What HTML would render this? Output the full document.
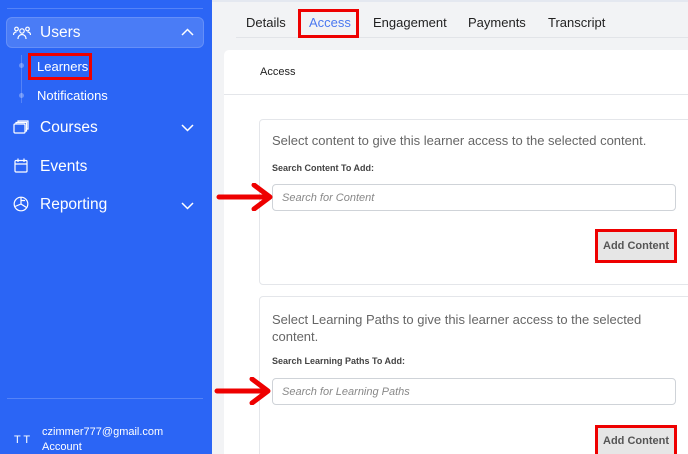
<!DOCTYPE html>
<html><head><style>
*{box-sizing:border-box;margin:0;padding:0}
html,body{width:688px;height:454px;overflow:hidden}
body{background:#f2f3f5;font-family:"Liberation Sans",sans-serif;position:relative}
.sb{position:absolute;left:0;top:0;width:212px;height:454px;background:#2b65f5;color:#fff}
.hr{position:absolute;left:7px;width:196px;height:1px;background:rgba(255,255,255,.2)}
.ab{position:absolute}
.t{position:absolute;font-size:13px;color:#222}
.box{position:absolute;background:#fff;border:1px solid #e4e6ea;border-radius:4px}
.inp{position:absolute;left:272px;width:404px;height:27px;border:1px solid #cfd3d8;border-radius:4px;background:#fff;font-size:11px;font-style:italic;color:#888;padding:7px 9px}
.btn{position:absolute;left:595px;width:82px;border:3px solid #e00;background:#e6e6e6;font-size:11px;font-weight:bold;color:#555;text-align:center}
</style></head><body>
<div class="sb">
<div class="hr" style="top:8px"></div>
<div class="ab" style="left:6px;top:17px;width:198px;height:31px;background:rgba(255,255,255,.15);border-radius:6px;border:1px solid rgba(255,255,255,.15)"></div>
<svg class="ab" style="left:13px;top:26px" width="18" height="14" viewBox="0 0 18 14" fill="none" stroke="#fff" stroke-width="1.2"><circle cx="9" cy="5" r="2.2"/><path d="M5 13c0-3 2-4.5 4-4.5s4 1.5 4 4.5"/><circle cx="3.5" cy="3" r="1.8"/><circle cx="14.5" cy="3" r="1.8"/><path d="M0.5 9c0-2 1.3-3 3-3M17.5 9c0-2-1.3-3-3-3"/></svg>
<div class="ab" style="left:40px;top:24px;font-size:15.5px">Users</div>
<svg class="ab" style="left:181px;top:28px" width="13" height="8" viewBox="0 0 13 8" fill="none" stroke="#fff" stroke-width="1.5"><path d="M1 7l5.5-5.5L12 7"/></svg>
<div class="ab" style="left:21px;top:55px;width:1px;height:48px;background:rgba(255,255,255,.2)"></div>
<div class="ab" style="left:19px;top:63px;width:5px;height:5px;border-radius:50%;background:rgba(255,255,255,.3)"></div>
<div class="ab" style="left:19px;top:93px;width:5px;height:5px;border-radius:50%;background:rgba(255,255,255,.3)"></div>
<div class="ab" style="left:28px;top:53px;width:64px;height:27px;border:3px solid #e00"></div>
<div class="ab" style="left:37px;top:59px;font-size:13px">Learners</div>
<div class="ab" style="left:37px;top:88px;font-size:13px">Notifications</div>
<svg class="ab" style="left:13px;top:120px" width="16" height="14" viewBox="0 0 16 14" fill="none" stroke="#fff" stroke-width="1.2"><rect x="1" y="4" width="11" height="9" rx="1"/><path d="M3 4V2.5h10.5V11H12M5 2.5V1h10v8h-1.5"/></svg>
<div class="ab" style="left:40px;top:119px;font-size:15.5px">Courses</div>
<svg class="ab" style="left:181px;top:124px" width="13" height="8" viewBox="0 0 13 8" fill="none" stroke="#fff" stroke-width="1.5"><path d="M1 1l5.5 5.5L12 1"/></svg>
<svg class="ab" style="left:14px;top:158px" width="14" height="15" viewBox="0 0 14 15" fill="none" stroke="#fff" stroke-width="1.2"><rect x="1" y="2.5" width="12" height="11.5" rx="1"/><path d="M1 6h12M4 0.5v3.5M10 0.5v3.5"/></svg>
<div class="ab" style="left:40px;top:158px;font-size:15.5px">Events</div>
<svg class="ab" style="left:13px;top:196px" width="16" height="16" viewBox="0 0 16 16" fill="none" stroke="#fff" stroke-width="1.2"><circle cx="8" cy="8" r="6.8"/><path d="M8 1.2V8l5.5 3.5M8 8L2 10.5M8 4.5l4 0"/></svg>
<div class="ab" style="left:40px;top:196px;font-size:15.5px">Reporting</div>
<svg class="ab" style="left:181px;top:202px" width="13" height="8" viewBox="0 0 13 8" fill="none" stroke="#fff" stroke-width="1.5"><path d="M1 1l5.5 5.5L12 1"/></svg>
<div class="hr" style="top:398px"></div>
<div class="ab" style="left:14px;top:434px;font-size:11px">T T</div>
<div class="ab" style="left:42px;top:426px;font-size:11px">czimmer777@gmail.com</div>
<div class="ab" style="left:42px;top:441px;font-size:11px">Account</div>
</div>
<div class="ab" style="left:212px;top:0;width:476px;height:2px;background:#e4e8f0"></div>
<div class="ab" style="left:236px;top:37px;width:452px;height:1px;background:#e2e4e8"></div>
<div class="t" style="left:246px;top:15px">Details</div>
<div class="ab" style="left:298px;top:9px;width:61px;height:29px;border:3px solid #e00"></div>
<div class="t" style="left:309px;top:15px;color:#4a78f0">Access</div>
<div class="t" style="left:373px;top:15px">Engagement</div>
<div class="t" style="left:468px;top:15px">Payments</div>
<div class="t" style="left:548px;top:15px">Transcript</div>
<div class="ab" style="left:224px;top:50px;width:464px;height:404px;background:#fff;border-radius:5px 0 0 0"></div>
<div class="ab" style="left:224px;top:94px;width:464px;height:1px;background:#e4e6ea"></div>
<div class="t" style="left:260px;top:66px;font-size:11px">Access</div>
<div class="box" style="left:259px;top:119px;width:440px;height:166px"></div>
<div class="t" style="left:272px;top:133px;color:#666">Select content to give this learner access to the selected content.</div>
<div class="t" style="left:272px;top:163px;font-size:9px;font-weight:bold;color:#444">Search Content To Add:</div>
<div class="inp" style="top:184px">Search for Content</div>
<div class="btn" style="top:229px;height:34px;padding-top:8px">Add Content</div>
<div class="box" style="left:259px;top:296px;width:440px;height:170px"></div>
<div class="t" style="left:272px;top:311px;color:#666;line-height:17px;width:380px">Select Learning Paths to give this learner access to the selected content.</div>
<div class="t" style="left:272px;top:356px;font-size:9px;font-weight:bold;color:#444">Search Learning Paths To Add:</div>
<div class="inp" style="top:378px">Search for Learning Paths</div>
<div class="btn" style="top:425px;height:34px;padding-top:7px">Add Content</div>
<svg class="ab" style="left:216px;top:183px" width="58" height="28" viewBox="0 0 58 28"><path d="M3 14H52M38 2L54 14L38 26" fill="none" stroke="#e00" stroke-width="5" stroke-linecap="round" stroke-linejoin="round"/></svg>
<svg class="ab" style="left:214px;top:377px" width="58" height="28" viewBox="0 0 58 28"><path d="M3 14H52M38 2L54 14L38 26" fill="none" stroke="#e00" stroke-width="5" stroke-linecap="round" stroke-linejoin="round"/></svg>
</body></html>
